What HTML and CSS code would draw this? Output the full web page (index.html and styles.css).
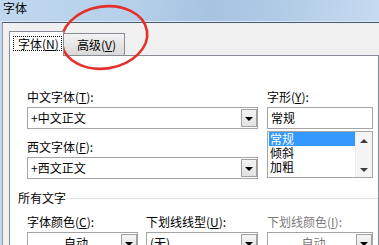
FILE: index.html
```html
<!DOCTYPE html>
<html lang="zh-CN">
<head>
    <meta charset="UTF-8">
    <title>字体</title>
    <link rel="stylesheet" href="styles.css">
</head>
<body>
    <div class="titlebar">字体</div>
    <div class="dialog">
        <div class="tabs">
            <div class="tab active"><span class="focus">字体(<u>N</u>)</span></div>
            <div class="tab">高级(<u>V</u>)</div>
        </div>
        <div class="panel">
            <div class="top-row">
                <div class="col-left">
                    <div class="label">中文字体(<u>T</u>):</div>
                    <div class="combo edit"><span class="value">+中文正文</span><span class="drop"></span></div>
                    <div class="label second">西文字体(<u>F</u>):</div>
                    <div class="combo edit"><span class="value">+西文正文</span><span class="drop"></span></div>
                </div>
                <div class="col-right">
                    <div class="label">字形(<u>Y</u>):</div>
                    <div class="field">常规</div>
                    <div class="listbox">
                        <ul class="items">
                            <li class="selected">常规</li>
                            <li>倾斜</li>
                            <li>加粗</li>
                        </ul>
                        <div class="scrollbar">
                            <span class="arrow up"></span>
                            <span class="arrow down"></span>
                        </div>
                    </div>
                </div>
            </div>

            <div class="group"><span>所有文字</span></div>

            <div class="bottom-row">
                <div class="col c1">
                    <div class="label">字体颜色(<u>C</u>):</div>
                    <div class="combo list"><span class="value center">自动</span><span class="drop"></span></div>
                </div>
                <div class="col c2">
                    <div class="label">下划线线型(<u>U</u>):</div>
                    <div class="combo list"><span class="value">(无)</span><span class="drop"></span></div>
                </div>
                <div class="col c3 disabled">
                    <div class="label">下划线颜色(<u>I</u>):</div>
                    <div class="combo list"><span class="value center">自动</span><span class="drop"></span></div>
                </div>
            </div>
        </div>
    </div>

    <svg class="marker" width="379" height="245" viewBox="0 0 379 245">
        <ellipse cx="104.5" cy="37.5" rx="43" ry="31" transform="rotate(-9 104.5 37.5)"
                 fill="none" stroke="#e4302b" stroke-width="2.6"/>
    </svg>
</body>
</html>
```

FILE: styles.css
```css
/* Word font dialog, cropped */
* {
    box-sizing: border-box;
}
body {
    margin: 0;
    width: 379px;
    height: 245px;
    overflow: hidden;
    position: relative;
    background: #c4d8ec;
    font-family: "Noto Sans CJK SC", "Liberation Sans", sans-serif;
    font-size: 12px;
    color: #000;
}
u {
    text-decoration: underline;
    text-underline-offset: 1px;
}

.titlebar {
    height: 22px;
    padding: 1px 0 0 3px;
    line-height: 14px;
    background: linear-gradient(100deg, #c0d7ef 0%, #b6d0ea 35%, #a6c3e0 55%, #b2cce7 75%, #c7dbf0 100%);
    box-shadow: inset 0 -1px 0 #dbe8f5;
}

.dialog {
    margin-left: 2px;
    height: 223px;
    background: #f0f0f0;
    border-top: 1px solid #45596f;
    border-left: 1px solid #8d9aab;
}

.tabs {
    height: 32px;
    padding-left: 6px;
    display: flex;
    align-items: flex-end;
}
.tab {
    height: 22px;
    width: 62px;
    margin-left: -1px;
    padding: 4px 0 0 13px;
    line-height: 14px;
    border: 1px solid #898c95;
    border-bottom: 0;
    background: linear-gradient(#f3f3f3, #e6e6e6 50%, #d9d9d9);
}
.tab.active {
    position: relative;
    z-index: 1;
    height: 25px;
    width: 55px;
    margin: 0 0 -1px 0;
    padding: 4px 0 0 3px;
    background: #fff;
}
.focus {
    display: block;
    width: 49px;
    height: 15px;
    padding-left: 4px;
    line-height: 13px;
    border: 1px dotted #000;
}

.panel {
    margin-left: 6px;
    height: 200px;
    background: #fff;
    border: 1px solid #898c95;
    padding: 34px 0 0 17px;
}

.top-row {
    display: flex;
}
.col-left {
    width: 231px;
    margin-right: 9px;
}
.col-right {
    width: 106px;
}
.label {
    line-height: 14px;
    height: 14px;
    margin-bottom: 3px;
    white-space: nowrap;
}
.label.second {
    margin-top: 11px;
}

.combo, .field {
    height: 22px;
    border: 1px solid #a5a5a5;
    background: #fff;
    display: flex;
    align-items: stretch;
}
.combo .value, .field {
    flex: 1;
    padding-left: 3px;
    line-height: 19px;
}
.combo .value.center {
    text-align: center;
}
.drop {
    width: 16px;
    margin: 1px 0 1px 0;
    border: 1px solid #a0a0a0;
    background: linear-gradient(#f4f4f4, #e2e2e2);
    display: flex;
    align-items: center;
    justify-content: center;
}
.drop::after {
    content: "";
    border-left: 4px solid transparent;
    border-right: 4px solid transparent;
    border-top: 4px solid #000;
    margin-top: 1px;
}

.listbox {
    margin-top: 2px;
    height: 47px;
    border: 1px solid #a5a5a5;
    display: flex;
}
.items {
    list-style: none;
    margin: 0;
    padding: 0 0 0 1px;
    flex: 1;
}
.items li {
    height: 14px;
    line-height: 14px;
    padding-left: 1px;
}
.items li.selected {
    background: #3399ff;
    color: #fff;
}
.scrollbar {
    width: 17px;
    background: #f4f4f4;
    border-left: 1px solid #ececec;
    display: flex;
    flex-direction: column;
    justify-content: space-between;
    align-items: center;
    padding: 7px 0 5px;
}
.arrow {
    width: 0;
    height: 0;
    border-left: 4px solid transparent;
    border-right: 4px solid transparent;
}
.arrow.up {
    border-bottom: 4px solid #3c3c3c;
}
.arrow.down {
    border-top: 4px solid #3c3c3c;
}

.group {
    margin: 12px 0 0 -9px;
    display: flex;
    align-items: center;
    line-height: 14px;
}
.group::after {
    content: "";
    flex: 1;
    height: 1px;
    margin-left: 3px;
    background: #dcdfe3;
}

.bottom-row {
    display: flex;
    margin-top: 10px;
}
.col.c1 {
    width: 111px;
    margin-right: 8px;
}
.col.c2 {
    width: 112px;
    margin-right: 9px;
}
.col.c3 {
    width: 106px;
}
.disabled .label,
.disabled .value {
    color: #7a7a7a;
}
.combo.list .value {
    line-height: 20px;
}

.marker {
    position: absolute;
    left: 0;
    top: 0;
    pointer-events: none;
}
```
